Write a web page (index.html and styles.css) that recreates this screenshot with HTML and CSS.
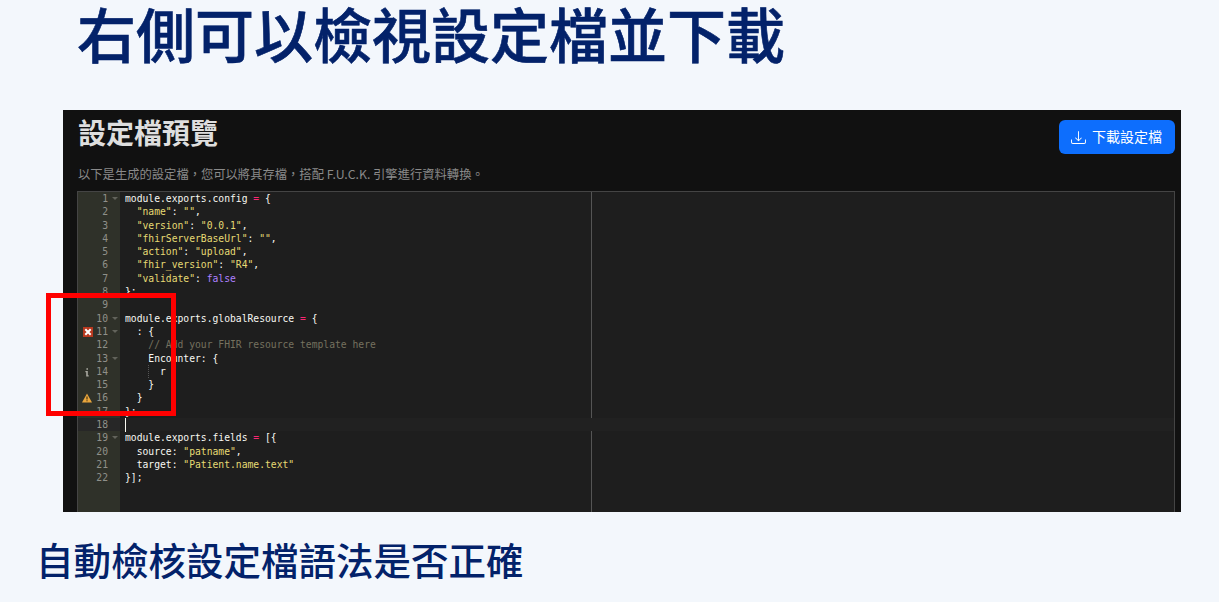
FILE: index.html
```html
<!DOCTYPE html>
<html lang="zh-Hant">
<head>
<meta charset="utf-8">
<title>設定檔預覽</title>
<link rel="stylesheet" href="styles.css">
</head>
<body>
<main class="slide">
  <h1 class="title">右側可以檢視設定檔並下載</h1>
  <section class="panel">
    <header class="panel-head">
      <h2 class="panel-title">設定檔預覽</h2>
      <button class="btn" type="button">
        <svg class="btn-icon" viewBox="0 0 16 16" width="16" height="16" fill="currentColor"><path d="M.5 9.9a.5.5 0 0 1 .5.5v2.5a1 1 0 0 0 1 1h12a1 1 0 0 0 1-1v-2.5a.5.5 0 0 1 1 0v2.5a2 2 0 0 1-2 2H2a2 2 0 0 1-2-2v-2.5a.5.5 0 0 1 .5-.5z"/><path d="M7.65 11.85a.5.5 0 0 0 .7 0l3-3a.5.5 0 0 0-.7-.7L8.5 10.29V1.5a.5.5 0 0 0-1 0v8.79L5.35 8.15a.5.5 0 1 0-.7.7l3 3z"/></svg>
        <span class="btn-label">下載設定檔</span>
      </button>
    </header>
    <p class="panel-desc">以下是生成的設定檔，您可以將其存檔，搭配 F.U.C.K. 引擎進行資料轉換。</p>
    <div class="editor">
      <div class="margin-line"></div>
      <div class="row"><div class="gutter fold">1</div><div class="code">module.exports.config <i class="kw">=</i> {</div></div>
      <div class="row"><div class="gutter">2</div><div class="code">  <i class="str">"name"</i>: <i class="str">""</i>,</div></div>
      <div class="row"><div class="gutter">3</div><div class="code">  <i class="str">"version"</i>: <i class="str">"0.0.1"</i>,</div></div>
      <div class="row"><div class="gutter">4</div><div class="code">  <i class="str">"fhirServerBaseUrl"</i>: <i class="str">""</i>,</div></div>
      <div class="row"><div class="gutter">5</div><div class="code">  <i class="str">"action"</i>: <i class="str">"upload"</i>,</div></div>
      <div class="row"><div class="gutter">6</div><div class="code">  <i class="str">"fhir_version"</i>: <i class="str">"R4"</i>,</div></div>
      <div class="row"><div class="gutter">7</div><div class="code">  <i class="str">"validate"</i>: <i class="bool">false</i></div></div>
      <div class="row"><div class="gutter">8</div><div class="code">};</div></div>
      <div class="row"><div class="gutter">9</div><div class="code"></div></div>
      <div class="row"><div class="gutter fold">10</div><div class="code">module.exports.globalResource <i class="kw">=</i> {</div></div>
      <div class="row"><div class="gutter fold">
        <svg class="mark" viewBox="0 0 10 10" width="10" height="10"><rect width="10" height="10" fill="#b8391f"/><path d="M2.3 2.3l5.4 5.4M7.7 2.3L2.3 7.7" stroke="#fff" stroke-width="2"/></svg>11</div><div class="code">  : {</div></div>
      <div class="row"><div class="gutter">12</div><div class="code">    <i class="cm">// Add your FHIR resource template here</i></div></div>
      <div class="row"><div class="gutter fold">13</div><div class="code">    Encounter: {</div></div>
      <div class="row"><div class="gutter">
        <svg class="mark mark-info" viewBox="0 0 10 10" width="10" height="10"><path d="M4.4 1.2h1.6v1.6H4.4zM3.4 4h2.4v4.2h.9v1.2H4.2V5.2h-.8z" fill="#a9a9a0"/></svg>14</div><div class="code">    <span class="guide"></span>  r</div></div>
      <div class="row"><div class="gutter">15</div><div class="code">    }</div></div>
      <div class="row"><div class="gutter">
        <svg class="mark mark-warn" viewBox="0 0 10 10" width="10" height="10"><path d="M5 .6L10 9.6H0z" fill="#e9a63c"/><path d="M5 3.4v3M5 7.2v1.1" stroke="#3a2a10" stroke-width="1.1"/></svg>16</div><div class="code">  }</div></div>
      <div class="row"><div class="gutter">17</div><div class="code">};</div></div>
      <div class="row row-active"><div class="gutter">18</div><div class="code"><span class="caret"></span></div></div>
      <div class="row"><div class="gutter fold">19</div><div class="code">module.exports.fields <i class="kw">=</i> [{</div></div>
      <div class="row"><div class="gutter">20</div><div class="code">  source: <i class="str">"patname"</i>,</div></div>
      <div class="row"><div class="gutter">21</div><div class="code">  target: <i class="str">"Patient.name.text"</i></div></div>
      <div class="row"><div class="gutter">22</div><div class="code">}];</div></div>
    </div>
  </section>
  <h2 class="subtitle">自動檢核設定檔語法是否正確</h2>
  <div class="highlight"></div>
</main>
</body>
</html>
```

FILE: styles.css
```css
* { box-sizing: border-box; }
html, body { margin: 0; height: 100%; }
body {
  background: #f3f7fc;
  font-family: "Noto Sans CJK TC", "Liberation Sans", sans-serif;
  overflow: hidden;
}
.slide { position: relative; height: 602px; padding-left: 63px; }
.title {
  margin: 0 0 0 14px;
  height: 110px;
  font-size: 59px;
  line-height: 66px;
  font-weight: 500;
  -webkit-text-stroke: 0.6px #03226a;
  color: #03226a;
  white-space: nowrap;
}
.panel {
  width: 1118px;
  height: 402px;
  background: #111;
  padding: 0 6px 0 14px;
  overflow: hidden;
}
.panel-head {
  display: flex;
  justify-content: space-between;
  align-items: flex-start;
  height: 52px;
  padding-top: 10px;
}
.panel-title {
  margin: 0 0 0 1px;
  font-size: 28px;
  line-height: 24px;
  font-weight: 700;
  color: #dedede;
}
.btn {
  display: flex;
  align-items: center;
  gap: 6px;
  width: 116px;
  height: 34px;
  padding: 0 12px;
  border: 0;
  border-radius: 6px;
  background: #0d6efd;
  color: #fff;
  font: 14px/20px "Noto Sans CJK TC", sans-serif;
  white-space: nowrap;
}
.btn-icon { flex: none; width: 15px; height: 15px; }
.btn-label { padding-bottom: 2px; }
.panel-desc {
  margin: 0 0 0 1px;
  height: 29px;
  padding-top: 5px;
  font-size: 12.3px;
  line-height: 14px;
  color: #8a8a8a;
  white-space: nowrap;
}
.editor {
  position: relative;
  width: 1098px;
  height: 330px;
  background: #1e1e1e;
  border: 1px solid #444;
  border-bottom: 0;
  font-family: "DejaVu Sans Mono", monospace;
  font-size: 9.7px;
  line-height: 13.3px;
  color: #f8f8f2;
}
.editor::before {
  content: "";
  position: absolute;
  left: 0; top: 0; bottom: 0;
  width: 42px;
  background: #2f3129;
}
.margin-line {
  position: absolute;
  left: 513px; top: 0; bottom: 0;
  width: 1px;
  background: #555;
}
.row { position: relative; display: flex; height: 13.3px; }
.gutter {
  position: relative;
  flex: none;
  width: 42px;
  padding-right: 12px;
  text-align: right;
  color: #8f908a;
}
.fold::after {
  content: "";
  position: absolute;
  left: 34px; top: 5px;
  border: 3px solid transparent;
  border-top: 3px solid #62635b;
  border-bottom: 0;
}
.code { flex: 1; padding-left: 5px; white-space: pre; }
.row-active { background: #212121; }
.row-active .gutter { background: #272727; }
.caret { display: inline-block; width: 1px; height: 14px; background: #f8f8f0; vertical-align: top; }
.kw { font-style: normal; color: #f92672; }
.str { font-style: normal; color: #e6db74; }
.bool { font-style: normal; color: #ae81ff; }
.cm { font-style: normal; color: #75715e; }
.guide { display: inline-block; width: 1px; height: 13px; margin-right: -1px; border-left: 1px dotted #555; vertical-align: top; }
.mark { position: absolute; left: 5px; top: 2px; }
.mark-info { left: 4px; }
.mark-warn { left: 4px; }
.subtitle {
  margin: 25px 0 0 -27px;
  font-size: 37.5px;
  line-height: 44px;
  font-weight: 500;
  color: #03226a;
  white-space: nowrap;
}
.highlight {
  position: absolute;
  left: 46px; top: 293px;
  width: 130px; height: 123px;
  border: 5px solid #ff0000;
}
```
